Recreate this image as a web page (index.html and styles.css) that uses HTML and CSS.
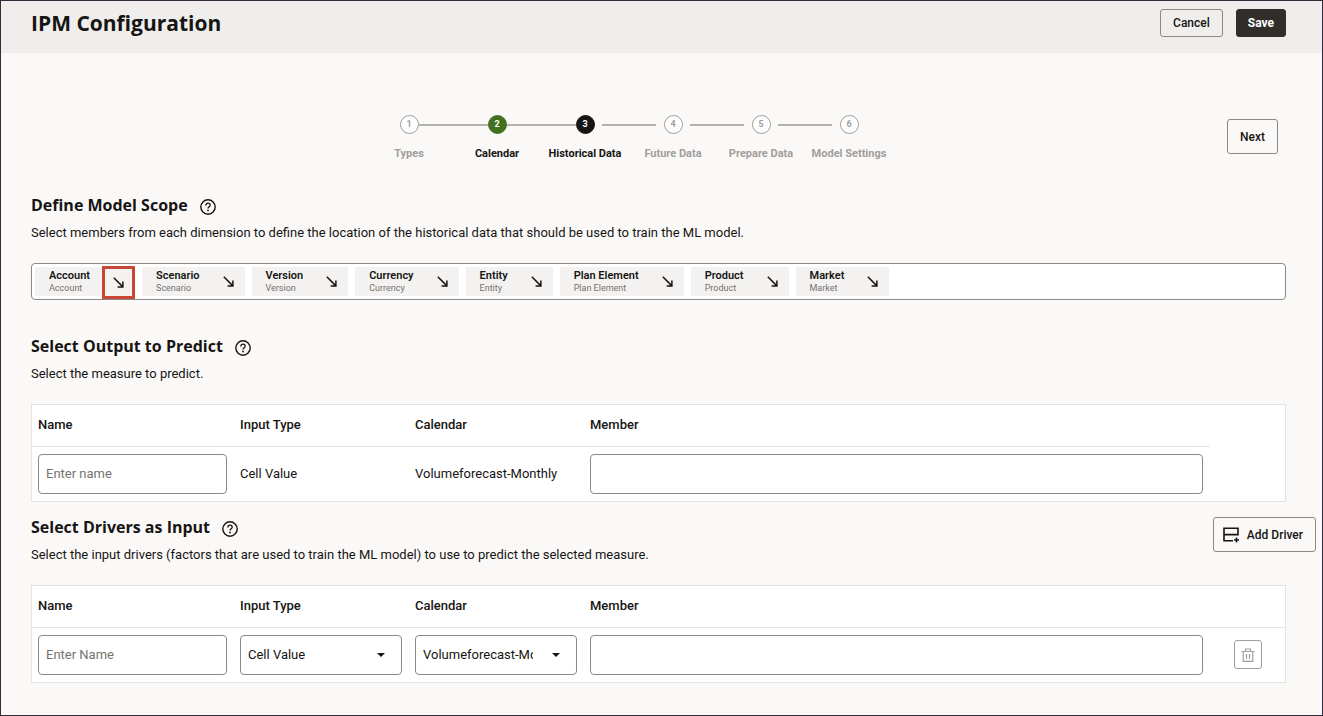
FILE: index.html
```html
<!DOCTYPE html>
<html lang="en">
<head>
  <meta charset="UTF-8" />
  <meta name="viewport" content="width=device-width, initial-scale=1.0"/>
  <title>IPM Configuration</title>
  <link rel="stylesheet" href="styles.css">
</head>
<body>

  <!-- Shared icons -->
  <svg class="sprite" aria-hidden="true">
    <symbol id="icon-help" viewBox="0 0 16 16">
      <circle cx="8" cy="8" r="7.2" fill="none" stroke="currentColor" stroke-width="1.4"/>
      <path d="M5.8 6.4C5.8 5 6.7 4.2 8 4.2s2.2.8 2.2 2c0 1.5-2.2 1.6-2.2 3.3" fill="none" stroke="currentColor" stroke-width="1.3"/>
      <circle cx="8" cy="11.5" r=".9" fill="currentColor"/>
    </symbol>
    <symbol id="icon-arrow" viewBox="0 0 11 11">
      <path d="M.8.8l8.600 8.600M9.900 4.600v5.300H4.600" fill="none" stroke="currentColor" stroke-width="1.5"/>
    </symbol>
  </svg>

  <header class="page-header">
    <h1>IPM Configuration</h1>
    <div class="header-actions">
      <button type="button" class="btn">Cancel</button>
      <button type="button" class="btn btn-primary">Save</button>
    </div>
  </header>

  <main>
    <!-- Train steps -->
    <div class="train-bar">
      <ol class="train">
        <li class="step joined"><span class="dot">1</span><span class="step-label">Types</span></li>
        <li class="step joined done"><span class="dot">2</span><span class="step-label">Calendar</span></li>
        <li class="step current"><span class="dot">3</span><span class="step-label">Historical Data</span></li>
        <li class="step"><span class="dot">4</span><span class="step-label">Future Data</span></li>
        <li class="step"><span class="dot">5</span><span class="step-label">Prepare Data</span></li>
        <li class="step"><span class="dot">6</span><span class="step-label">Model Settings</span></li>
      </ol>
      <button type="button" class="btn btn-tall">Next</button>
    </div>

    <!-- Model scope -->
    <section class="scope">
      <div class="section-title">
        <h2>Define Model Scope</h2>
        <button type="button" class="help" aria-label="Help"><svg><use href="#icon-help"/></svg></button>
      </div>
      <p>Select members from each dimension to define the location of the historical data that should be used to train the ML model.</p>
      <ul class="dimensions">
        <li class="chip"><div><strong>Account</strong><small>Account</small></div><button type="button" class="highlight" aria-label="Select Account"><svg><use href="#icon-arrow"/></svg></button></li>
        <li class="chip"><div><strong>Scenario</strong><small>Scenario</small></div><button type="button" aria-label="Select Scenario"><svg><use href="#icon-arrow"/></svg></button></li>
        <li class="chip"><div><strong>Version</strong><small>Version</small></div><button type="button" aria-label="Select Version"><svg><use href="#icon-arrow"/></svg></button></li>
        <li class="chip"><div><strong>Currency</strong><small>Currency</small></div><button type="button" aria-label="Select Currency"><svg><use href="#icon-arrow"/></svg></button></li>
        <li class="chip"><div><strong>Entity</strong><small>Entity</small></div><button type="button" aria-label="Select Entity"><svg><use href="#icon-arrow"/></svg></button></li>
        <li class="chip"><div><strong>Plan Element</strong><small>Plan Element</small></div><button type="button" aria-label="Select Plan Element"><svg><use href="#icon-arrow"/></svg></button></li>
        <li class="chip"><div><strong>Product</strong><small>Product</small></div><button type="button" aria-label="Select Product"><svg><use href="#icon-arrow"/></svg></button></li>
        <li class="chip"><div><strong>Market</strong><small>Market</small></div><button type="button" aria-label="Select Market"><svg><use href="#icon-arrow"/></svg></button></li>
      </ul>
    </section>

    <!-- Output -->
    <section class="output">
      <div class="section-title">
        <h2>Select Output to Predict</h2>
        <button type="button" class="help" aria-label="Help"><svg><use href="#icon-help"/></svg></button>
      </div>
      <p>Select the measure to predict.</p>
      <div class="panel panel-inset">
        <table>
          <thead>
            <tr>
              <th class="col-name">Name</th>
              <th class="col-type">Input Type</th>
              <th class="col-type">Calendar</th>
              <th>Member</th>
            </tr>
          </thead>
          <tbody>
            <tr>
              <td><input type="text" placeholder="Enter name" aria-label="Output name"></td>
              <td>Cell Value</td>
              <td>Volumeforecast-Monthly</td>
              <td><input type="text" aria-label="Output member"></td>
            </tr>
          </tbody>
        </table>
      </div>
    </section>

    <!-- Drivers -->
    <section class="drivers">
      <div class="drivers-head">
        <div>
          <div class="section-title">
            <h2>Select Drivers as Input</h2>
            <button type="button" class="help" aria-label="Help"><svg><use href="#icon-help"/></svg></button>
          </div>
          <p>Select the input drivers (factors that are used to train the ML model) to use to predict the selected measure.</p>
        </div>
        <button type="button" class="btn btn-tall btn-add">
          <svg viewBox="0 0 16 16" aria-hidden="true">
            <path d="M1 .5v14M1 1.300h14M15 .5v8M1 7.600h14M1 13.700h9" fill="none" stroke="currentColor" stroke-width="1.6"/>
            <path d="M13.500 10.500v5M11 13h5" stroke="currentColor" stroke-width="1.6"/>
          </svg>
          Add Driver
        </button>
      </div>
      <div class="panel">
        <table>
          <thead>
            <tr>
              <th class="col-name">Name</th>
              <th class="col-type">Input Type</th>
              <th class="col-type">Calendar</th>
              <th>Member</th>
              <th class="col-action"></th>
            </tr>
          </thead>
          <tbody>
            <tr>
              <td><input type="text" placeholder="Enter Name" aria-label="Driver name"></td>
              <td>
                <div class="select">
                  <select aria-label="Input type"><option>Cell Value</option></select>
                </div>
              </td>
              <td>
                <div class="select">
                  <select aria-label="Calendar"><option>Volumeforecast-Monthly</option></select>
                </div>
              </td>
              <td><input type="text" aria-label="Driver member"></td>
              <td class="action">
                <button type="button" class="btn-delete" aria-label="Delete driver">
                  <svg viewBox="0 0 14 14"><path d="M.5 3.500h13M4.500 3.500V1h5v2.500M2.200 3.500v9.800h9.600V3.500M5.500 6v5M8.500 6v5" fill="none" stroke="currentColor" stroke-width="1.200"/></svg>
                </button>
              </td>
            </tr>
          </tbody>
        </table>
      </div>
    </section>
  </main>

</body>
</html>
```

FILE: styles.css
```css
:root {
  --text: #161513;
  --muted: #a09e9b;
  --border: #8b8985;
  --line: #e4e3e1;
  --page: #fbf9f8;
  --font-main: Roboto, "Noto Sans", sans-serif;
  --font-title: "Open Sans", "Noto Sans", sans-serif;
}

* {
  margin: 0;
  padding: 0;
  box-sizing: border-box;
}

body {
  min-height: 100vh;
  border: 1px solid #312d3c;
  background-color: var(--page);
  color: var(--text);
  font-family: var(--font-main);
  font-size: 13px;
  line-height: 20px;
}

button,
input,
select {
  font: inherit;
  color: inherit;
}

button {
  cursor: pointer;
}

ol,
ul {
  list-style: none;
}

.sprite {
  position: absolute;
  width: 0;
  height: 0;
}

.page-header {
  display: flex;
  justify-content: space-between;
  align-items: flex-start;
  height: 52px;
  padding: 8px 36px 0 30px;
  background-color: #f0eeec;
}

h1 {
  font-family: var(--font-title);
  font-size: 21px;
  line-height: 28px;
}

.header-actions {
  display: flex;
  gap: 13px;
}

.btn {
  height: 28px;
  padding: 0 12px;
  border: 1px solid var(--border);
  border-radius: 3px;
  background: transparent;
  font-size: 12px;
  font-weight: 500;
  line-height: 16px;
}

.btn-primary {
  padding: 0 11px;
  border-color: #312d2a;
  background-color: #312d2a;
  color: white;
  font-weight: 700;
}

.btn-tall {
  height: 35px;
}

main {
  padding: 62px 36px 32px 30px;
}

/* Train */
.train-bar {
  display: flex;
  align-items: flex-start;
  padding-right: 8px;
}

.train-bar .btn {
  margin-top: 4px;
}

.train {
  flex: 1;
  display: flex;
  justify-content: center;
}

.step {
  position: relative;
  width: 88px;
  display: flex;
  flex-direction: column;
  align-items: center;
  gap: 10px;
  color: var(--muted);
  font-size: 11px;
  font-weight: 700;
  line-height: 20px;
  white-space: nowrap;
}

.dot {
  width: 19px;
  height: 19px;
  border: 1px solid var(--muted);
  border-radius: 50%;
  background-color: white;
  font-size: 9px;
  line-height: 17px;
  text-align: center;
}

.step:not(:last-child)::after {
  content: "";
  position: absolute;
  top: 9px;
  left: 61px;
  width: 54px;
  height: 2px;
  background-color: #b4b2af;
}

.step.joined::after {
  left: 54px;
  width: 69px;
}

.done,
.current {
  color: var(--text);
}

.done .dot {
  border-color: #41701f;
  background-color: #41701f;
  color: white;
}

.current .dot {
  border-color: #161513;
  background-color: #161513;
  color: white;
}

/* Sections */
.scope {
  margin-top: 29px;
}

.output {
  margin-top: 34px;
}

.drivers {
  margin-top: 13px;
}

.section-title {
  display: flex;
  align-items: center;
  gap: 12px;
  margin-bottom: 6px;
}

h2 {
  font-family: var(--font-title);
  font-size: 16px;
  line-height: 24px;
}

.help {
  width: 16px;
  height: 16px;
  margin-top: 3px;
  border: none;
  background: none;
}

.help svg {
  display: block;
  width: 16px;
  height: 16px;
}

.dimensions {
  display: flex;
  gap: 7px;
  margin-top: 20px;
  padding: 3px;
  border: 1px solid var(--border);
  border-radius: 4px;
  background-color: white;
}

.chip {
  display: flex;
  gap: 12px;
  height: 29px;
  padding-left: 14px;
  background-color: #f4f2f1;
}

.chip strong,
.chip small {
  display: block;
}

.chip strong {
  font-size: 11px;
  font-weight: 600;
  line-height: 17px;
}

.chip small {
  color: #74716d;
  font-size: 9px;
  line-height: 9px;
}

.chip button {
  display: flex;
  align-items: center;
  justify-content: center;
  width: 33px;
  border: none;
  background: none;
}

.chip button svg {
  width: 11px;
  height: 11px;
}

.chip .highlight {
  height: 33px;
  margin-top: -1px;
  border: 3px solid #c74634;
}

/* Tables */
.panel {
  margin-top: 20px;
  border: 1px solid var(--line);
  background-color: white;
}

.panel-inset {
  padding-right: 75px;
}

table {
  width: 100%;
  border-collapse: collapse;
  table-layout: fixed;
}

th {
  height: 41px;
  padding: 0 7px 0 6px;
  border-bottom: 1px solid var(--line);
  font-weight: 500;
  text-align: left;
}

td {
  height: 55px;
  padding: 0 7px 0 6px;
}

.col-name {
  width: 202px;
}

.col-type {
  width: 175px;
}

.col-action {
  width: 75px;
}

input,
select {
  display: block;
  width: 100%;
  height: 40px;
  padding: 0 7px;
  border: 1px solid var(--border);
  border-radius: 4px;
  background-color: white;
}

input::placeholder {
  color: #75736f;
  opacity: 1;
}

.select {
  position: relative;
}

.select::after {
  content: "";
  position: absolute;
  top: 18px;
  right: 17px;
  border: 4px solid transparent;
  border-top-color: var(--text);
  border-bottom: none;
  pointer-events: none;
}

select {
  appearance: none;
  padding-right: 43px;
}

.drivers-head {
  display: flex;
  justify-content: space-between;
  align-items: flex-start;
  margin-right: -30px;
}

.btn-add {
  display: flex;
  align-items: center;
  gap: 8px;
  margin-top: 2px;
  padding: 0 12px 0 9px;
}

.btn-add svg {
  width: 16px;
  height: 16px;
}

.action {
  padding: 0;
  text-align: center;
}

.btn-delete {
  display: inline-flex;
  align-items: center;
  justify-content: center;
  width: 28px;
  height: 29px;
  border: 1px solid #a09e9b;
  border-radius: 3px;
  background: none;
  color: #a09e9b;
}

.btn-delete svg {
  width: 14px;
  height: 14px;
}
```
